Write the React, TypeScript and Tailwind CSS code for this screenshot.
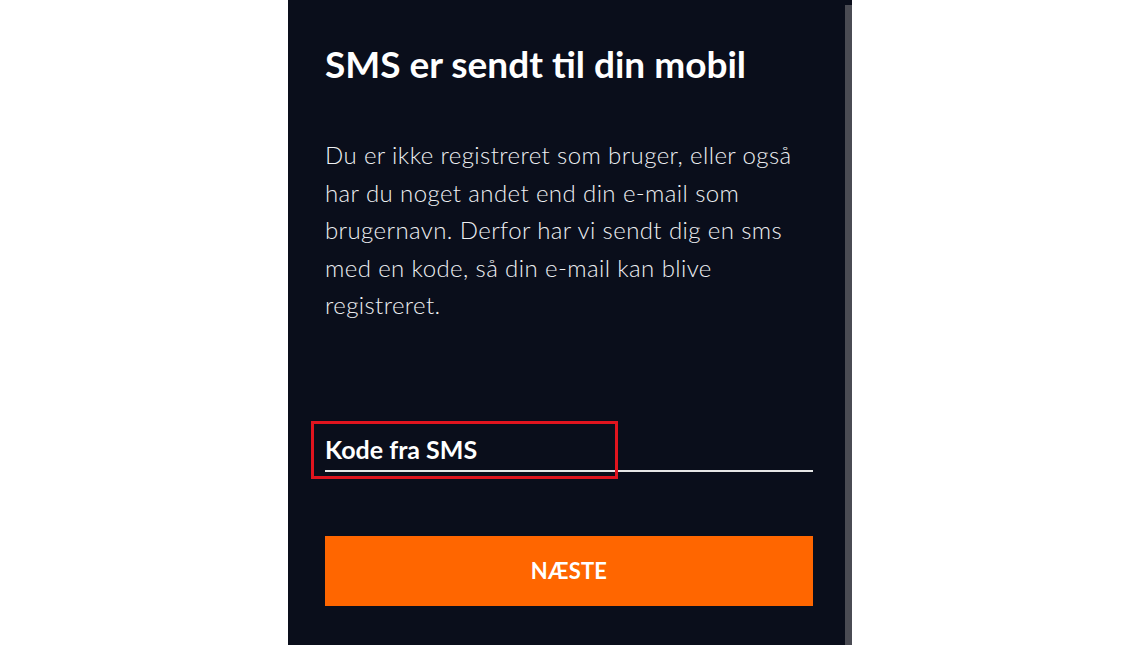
export default function App() {
  return (
    <div className="w-full h-[645px] bg-white flex justify-center overflow-hidden">
      <div className="w-[564px] h-full flex">
        {/* Panel */}
        <div className="w-[557px] h-full bg-[#0a0e1b] px-[37px] pt-[42px] font-['Lato',sans-serif] text-white relative">
          <h1 className="text-[37px] leading-[44px] font-bold tracking-[0px]">
            SMS er sendt til din mobil
          </h1>
          <p className="mt-[50px] text-[24px] leading-[37.5px] font-light text-[#eef0f3] tracking-[0.4px]">
            Du er ikke registreret som bruger, eller også
            <br />
            har du noget andet end din e-mail som
            <br />
            brugernavn. Derfor har vi sendt dig en sms
            <br />
            med en kode, så din e-mail kan blive
            <br />
            registreret.
          </p>

          <div className="mt-[110px] w-[488px] border-b-2 border-[#e6e6e6] pb-[6px]">
            <span className="block text-[25px] leading-[30px] font-bold">Kode fra SMS</span>
          </div>

          <button className="mt-[64px] w-[488px] h-[70px] bg-[#ff6600] text-white text-[22px] font-bold tracking-[0.2px]">
            NÆSTE
          </button>

          {/* annotation box */}
          <div className="absolute left-[23px] top-[421px] w-[307px] h-[58px] border-[3px] border-[#e0141e]" />
        </div>
        {/* Scrollbar */}
        <div className="w-[7px] h-full bg-[#0a0e1b] pt-[5px]">
          <div className="w-full h-full bg-[#4a4b53]" />
        </div>
      </div>
    </div>
  );
}
